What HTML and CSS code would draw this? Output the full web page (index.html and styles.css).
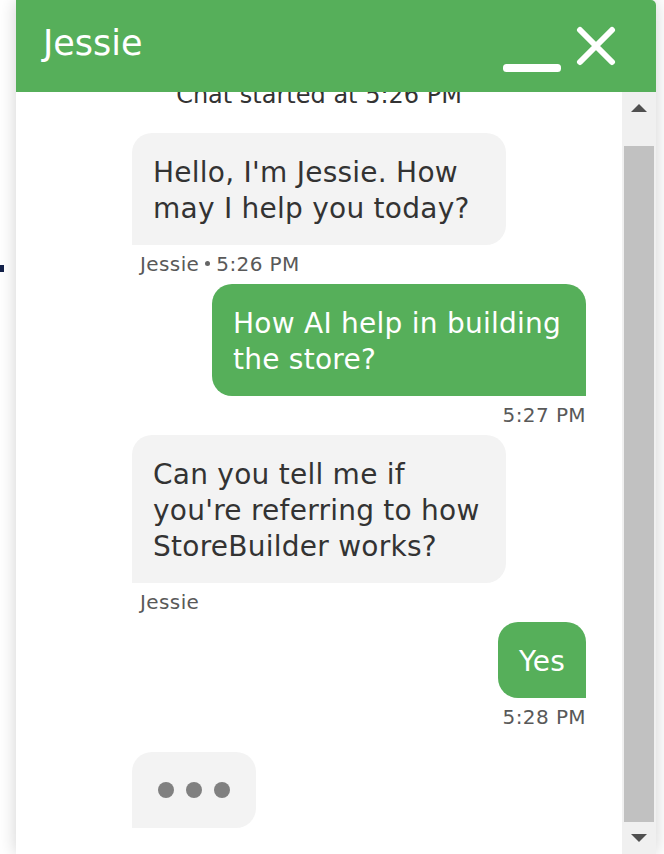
FILE: index.html
```html
<!DOCTYPE html>
<html>
<head>
    <title>Chat | Jessie</title>
    <link rel="stylesheet" href="styles.css">
</head>
<body>
    <div class="page-mark"></div>

    <div class="chat">
        <header class="chat-head">
            <span class="chat-title">Jessie</span>
            <div class="head-actions">
                <button class="head-btn minimize" title="Minimize">
                    <svg width="58" height="8" viewBox="0 0 58 8"><rect x="0" y="0" width="58" height="8" rx="3.5" fill="#fff"/></svg>
                </button>
                <button class="head-btn close" title="Close">
                    <svg width="40" height="40" viewBox="0 0 40 40"><path d="M4 4 L36 36 M36 4 L4 36" stroke="#fff" stroke-width="6" stroke-linecap="round"/></svg>
                </button>
            </div>
        </header>

        <div class="chat-body">
            <div class="log">
                <div class="started">Chat started at 5:26 PM</div>

                <div class="msg agent">
                    <div class="bubble">Hello, I'm Jessie. How may I help you today?</div>
                    <div class="meta">Jessie<span class="dot"></span>5:26 PM</div>
                </div>

                <div class="msg user">
                    <div class="bubble">How AI help in building the store?</div>
                    <div class="meta">5:27 PM</div>
                </div>

                <div class="msg agent">
                    <div class="bubble">Can you tell me if you're referring to how StoreBuilder works?</div>
                    <div class="meta">Jessie</div>
                </div>

                <div class="msg user">
                    <div class="bubble">Yes</div>
                    <div class="meta">5:28 PM</div>
                </div>

                <div class="typing">
                    <span></span><span></span><span></span>
                </div>
            </div>

            <div class="scrollbar">
                <div class="sb-btn">
                    <svg width="16" height="8" viewBox="0 0 16 8"><polygon points="8,0 16,8 0,8" fill="#505050"/></svg>
                </div>
                <div class="sb-track"><div class="sb-thumb"></div></div>
                <div class="sb-btn">
                    <svg width="16" height="8" viewBox="0 0 16 8"><polygon points="0,0 16,0 8,8" fill="#505050"/></svg>
                </div>
            </div>
        </div>
    </div>
</body>
</html>
```

FILE: styles.css
```css
body {
    margin: 0;
    background: #fff;
    font-family: "DejaVu Sans", Verdana, sans-serif;
    height: 100vh;
    overflow: hidden;
    position: relative;
}
.page-mark {
    position: absolute;
    left: 0;
    top: 265px;
    width: 4px;
    height: 7px;
    background: #14224a;
}
.chat {
    position: relative;
    margin-left: 16px;
    width: 640px;
    height: 100vh;
    display: flex;
    flex-direction: column;
    background: #fff;
    border-radius: 0 5px 0 0;
    box-shadow: 0 0 18px rgba(0, 0, 0, 0.18);
}
.chat-head {
    height: 92px;
    flex-shrink: 0;
    background: #56af5a;
    border-radius: 0 5px 0 0;
    display: flex;
    justify-content: space-between;
    align-items: flex-start;
    padding: 0 40px 0 27px;
    position: relative;
    z-index: 1;
}
.chat-title {
    color: #fff;
    font-size: 35px;
    line-height: 40px;
    padding-top: 23px;
}
.head-actions {
    display: flex;
    align-items: flex-start;
    gap: 15px;
    padding-top: 26px;
}
.head-btn {
    background: none;
    border: none;
    padding: 0;
    cursor: pointer;
}
.head-btn svg {
    display: block;
}
.minimize {
    margin-top: 38px;
}
.chat-body {
    flex: 1;
    display: flex;
    min-height: 0;
}
.log {
    flex: 1;
    display: flex;
    flex-direction: column;
    justify-content: flex-end;
    overflow: hidden;
    padding: 0 36px 26px 116px;
    color: #333;
}
.started {
    flex-shrink: 0;
    text-align: center;
    margin-left: -116px;
    margin-right: -36px;
    font-size: 24px;
    line-height: 30px;
    margin-bottom: 23px;
}
.msg {
    flex-shrink: 0;
    display: flex;
    flex-direction: column;
    margin-bottom: 7px;
}
.msg.agent {
    align-self: flex-start;
    align-items: flex-start;
}
.msg.user {
    align-self: flex-end;
    align-items: flex-end;
}
.bubble {
    max-width: 374px;
    box-sizing: border-box;
    padding: 22px 21px 18px;
    font-size: 28px;
    line-height: 36px;
    letter-spacing: 0.25px;
    border-radius: 20px;
}
.agent .bubble {
    background: #f3f3f3;
    color: #333;
    border-bottom-left-radius: 0;
}
.user .bubble {
    background: #56af5a;
    color: #fff;
    border-bottom-right-radius: 0;
}
.meta {
    margin-top: 6px;
    font-size: 20px;
    line-height: 26px;
    letter-spacing: 0.4px;
    color: #595959;
}
.agent .meta {
    padding-left: 8px;
}
.dot {
    display: inline-block;
    width: 5px;
    height: 5px;
    border-radius: 50%;
    background: #666;
    margin: 0 6px;
    vertical-align: 5px;
}
.msg:nth-last-child(2) {
    margin-bottom: 22px;
}
.typing {
    flex-shrink: 0;
    align-self: flex-start;
    display: flex;
    gap: 12px;
    padding: 30px 26px;
    background: #f3f3f3;
    border-radius: 20px 20px 20px 0;
}
.typing span {
    width: 16px;
    height: 16px;
    border-radius: 50%;
    background: #808080;
}
.scrollbar {
    width: 34px;
    flex-shrink: 0;
    display: flex;
    flex-direction: column;
    background: #f0f0f0;
}
.sb-btn {
    height: 32px;
    display: flex;
    align-items: center;
    justify-content: center;
}
.sb-track {
    flex: 1;
    display: flex;
    flex-direction: column;
    justify-content: flex-end;
    padding: 0 2px;
}
.sb-thumb {
    height: 676px;
    background: #c1c1c1;
}
```
